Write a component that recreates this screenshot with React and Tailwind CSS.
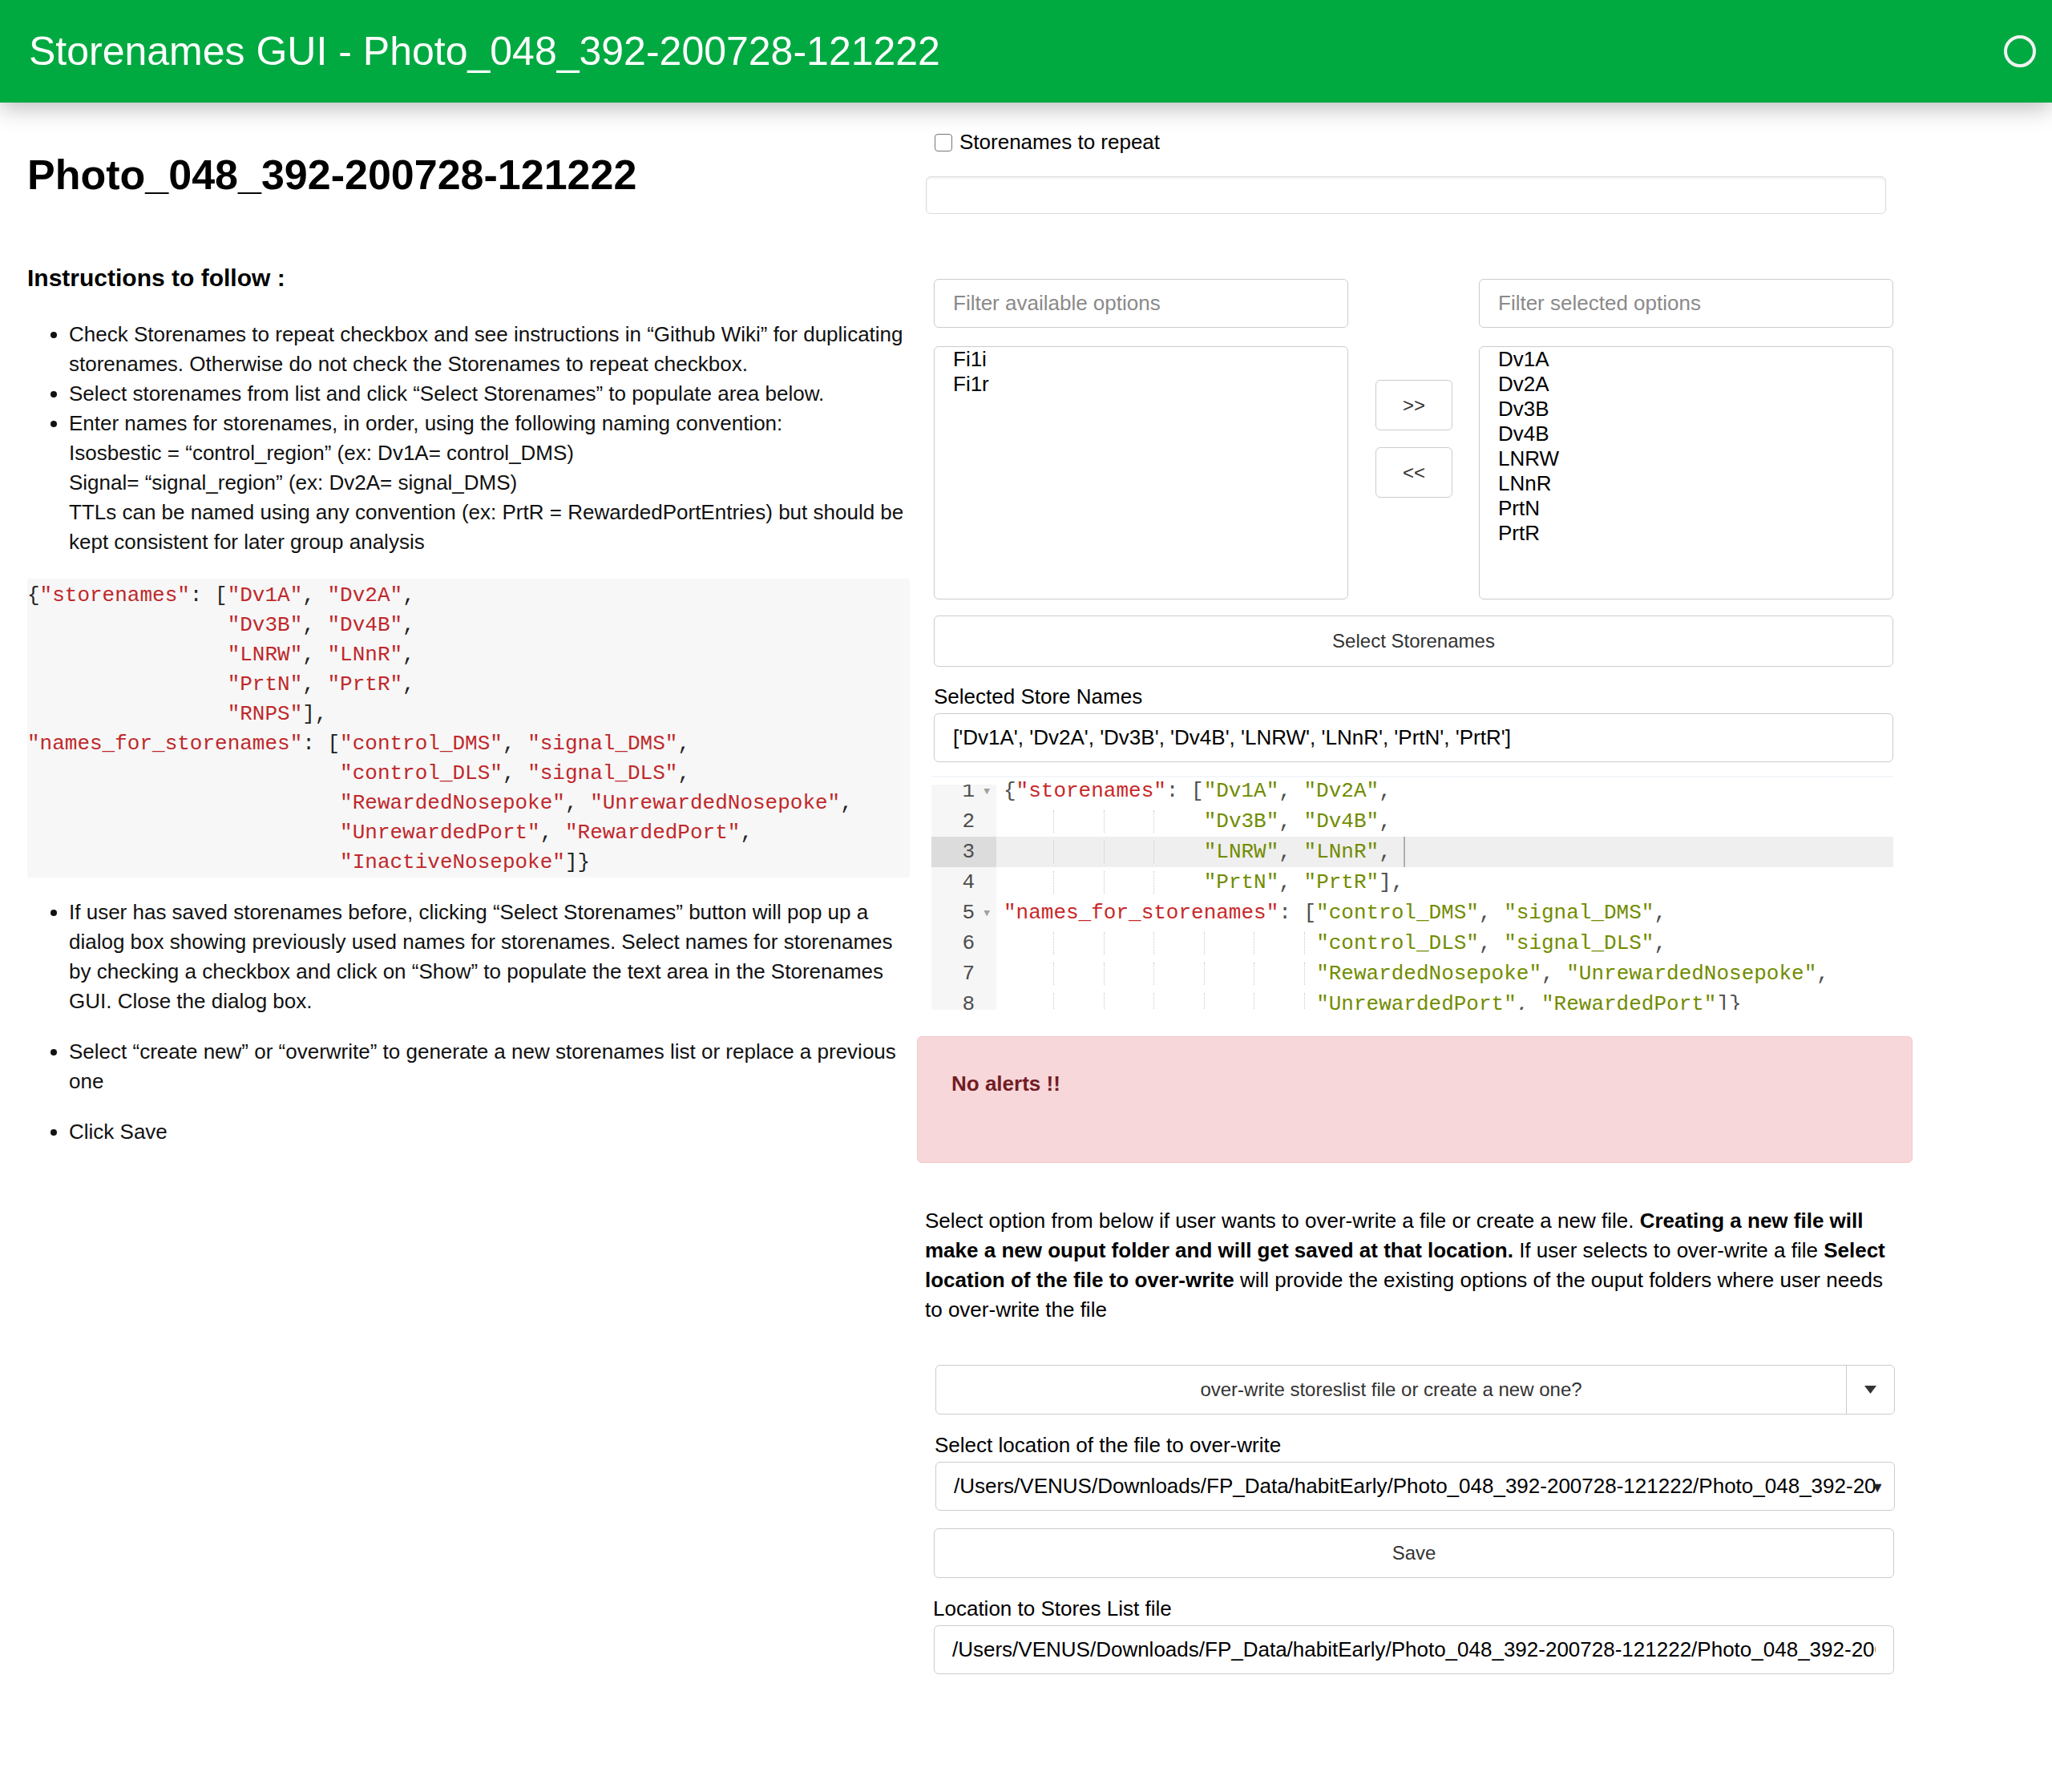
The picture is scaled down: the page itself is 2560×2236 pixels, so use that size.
import React from "react";

const mdCode = [
  '{"storenames": ["Dv1A", "Dv2A",',
  '                "Dv3B", "Dv4B",',
  '                "LNRW", "LNnR",',
  '                "PrtN", "PrtR",',
  '                "RNPS"],',
  '"names_for_storenames": ["control_DMS", "signal_DMS",',
  '                         "control_DLS", "signal_DLS",',
  '                         "RewardedNosepoke", "UnrewardedNosepoke",',
  '                         "UnrewardedPort", "RewardedPort",',
  '                         "InactiveNosepoke"]}',
];

const editorCode = [
  '{"storenames": ["Dv1A", "Dv2A",',
  '                "Dv3B", "Dv4B",',
  '                "LNRW", "LNnR",',
  '                "PrtN", "PrtR"],',
  '"names_for_storenames": ["control_DMS", "signal_DMS",',
  '                         "control_DLS", "signal_DLS",',
  '                         "RewardedNosepoke", "UnrewardedNosepoke",',
  '                         "UnrewardedPort", "RewardedPort"]}',
];

const available = ["Fi1i", "Fi1r"];
const selected = ["Dv1A", "Dv2A", "Dv3B", "Dv4B", "LNRW", "LNnR", "PrtN", "PrtR"];
const outPath =
  "/Users/VENUS/Downloads/FP_Data/habitEarly/Photo_048_392-200728-121222/Photo_048_392-200728-121222_output_1/storesList.csv";

const MdLine = ({ text }) => (
  <div className="h-[37px]">
    {text.split(/("[^"]*")/).map((p, i) =>
      p.startsWith('"') ? (
        <span key={i} className="text-[#c0282b]">{p}</span>
      ) : (
        <span key={i}>{p}</span>
      )
    )}
  </div>
);

// ace-style line: indent guides every 4 columns, keys red, values olive
const EditorLine = ({ text, n, active, fold }) => {
  const lead = text.match(/^ */)[0].length;
  const chunks = [];
  for (let c = 0; c < lead; c += 4) chunks.push(Math.min(4, lead - c));
  const parts = text.slice(lead).split(/("[^"]*")/);
  return (
    <div className={`flex h-[38px] ${active ? "bg-[#efefef]" : ""}`}>
      <div
        className={`relative w-[81px] shrink-0 pr-[27px] text-right text-[#4d4d4c] ${
          active ? "bg-[#dcdcdc]" : "bg-[#f6f6f6]"
        }`}
      >
        {n}
        {fold && (
          <span className="absolute right-[8px] top-[1px] text-[13px] text-[#a0a0a0]">▼</span>
        )}
      </div>
      <div className="relative flex-1 whitespace-pre pl-[9px] text-[#4d4d4c]">
        {chunks.map((w, i) => (
          <span key={i} className="relative inline-block">
            {" ".repeat(w)}
            {i > 0 && (
              <span className="absolute bottom-[5px] left-0 top-[5px] border-l-[1.5px] border-dotted border-[#c9c9c9]" />
            )}
          </span>
        ))}
        {parts.map((p, i) => {
          if (!p.startsWith('"')) return <span key={i}>{p}</span>;
          const isKey = (parts[i + 1] || "").startsWith(":");
          return (
            <span key={i} className={isKey ? "text-[#c82829]" : "text-[#718c00]"}>
              {p}
            </span>
          );
        })}
        {active && <span className="absolute left-[calc(9px+32ch)] top-0 h-full w-[2px] bg-[#aeafad]" />}
      </div>
    </div>
  );
};

const Box = ({ className = "", children }) => (
  <div className={`rounded-[6px] border border-[#cccccc] bg-white ${className}`}>{children}</div>
);

const Caret = () => (
  <svg width="15" height="10" viewBox="0 0 15 10">
    <polygon points="0,0 15,0 7.5,10" fill="#333" />
  </svg>
);

export default function App() {
  return (
    <div className="min-h-[2236px] w-[2560px] bg-white font-['Liberation_Sans',Arial,sans-serif] text-[#111]">
      {/* Header */}
      <header className="relative z-10 flex h-[128px] items-center justify-between bg-[#00aa41] pl-[36px] pr-[18px] shadow-[0_6px_28px_rgba(0,0,0,0.28)]">
        <h1 className="text-[50px] font-normal leading-none text-white">
          Storenames GUI - Photo_048_392-200728-121222
        </h1>
        <svg width="44" height="44" viewBox="0 0 44 44">
          <circle cx="22" cy="22" r="18" fill="none" stroke="#f2f2f2" strokeWidth="4" />
        </svg>
      </header>

      <div className="flex">
        {/* Left column: instructions */}
        <div className="ml-[34px] w-[1101px]">
          <h2 className="mt-[59px] text-[52px] font-bold leading-[62px] text-black">
            Photo_048_392-200728-121222
          </h2>
          <h3 className="mt-[80px] text-[30px] font-bold leading-[36px] text-black">
            Instructions to follow :
          </h3>
          <ul className="mt-[34px] list-disc pl-[52px] text-[26px] leading-[37px]">
            <li>
              Check Storenames to repeat checkbox and see instructions in “Github Wiki” for
              duplicating storenames. Otherwise do not check the Storenames to repeat checkbox.
            </li>
            <li>Select storenames from list and click “Select Storenames” to populate area below.</li>
            <li>
              Enter names for storenames, in order, using the following naming convention:
              <br />
              Isosbestic = “control_region” (ex: Dv1A= control_DMS)
              <br />
              Signal= “signal_region” (ex: Dv2A= signal_DMS)
              <br />
              TTLs can be named using any convention (ex: PrtR = RewardedPortEntries) but should be
              kept consistent for later group analysis
            </li>
          </ul>

          <pre className="mt-[27px] bg-[#f7f7f7] pt-[3px] font-['Liberation_Mono',monospace] text-[26px] leading-[37px] text-[#222]">
            {mdCode.map((l, i) => (
              <MdLine key={i} text={l} />
            ))}
          </pre>

          <ul className="mt-[25px] list-disc pl-[52px] text-[26px] leading-[37px]">
            <li className="mb-[26px]">
              If user has saved storenames before, clicking “Select Storenames” button will pop up a
              dialog box showing previously used names for storenames. Select names for storenames
              by checking a checkbox and click on “Show” to populate the text area in the
              Storenames GUI. Close the dialog box.
            </li>
            <li className="mb-[26px]">
              Select “create new” or “overwrite” to generate a new storenames list or replace a
              previous one
            </li>
            <li>Click Save</li>
          </ul>
        </div>

        {/* Right column: widgets */}
        <div className="ml-[9px] w-[1242px] text-[26px]">
          <label className="mt-[31px] flex h-[37px] items-center pl-[22px]">
            <span className="h-[22px] w-[22px] rounded-[4px] border-[1.5px] border-[#767676] bg-white" />
            <span className="ml-[9px] text-black">Storenames to repeat</span>
          </label>

          <div className="ml-[11px] mt-[24px] h-[47px] w-[1198px] rounded-[6px] border border-[#dcdcdc] shadow-[inset_0_2px_3px_rgba(0,0,0,0.06)]" />

          {/* Cross selector */}
          <div className="ml-[21px] mt-[81px] flex w-[1197px]">
            <div className="w-[517px]">
              <Box className="flex h-[61px] items-center pl-[23px] text-[#8a8a8a]">
                Filter available options
              </Box>
              <Box className="mt-[23px] h-[316px] pl-[23px] text-black">
                {available.map((s) => (
                  <div key={s} className="h-[31px] leading-[31px]">{s}</div>
                ))}
              </Box>
            </div>
            <div className="ml-[34px] flex w-[96px] flex-col gap-[21px] pt-[126px] text-[24px] text-[#333]">
              <Box className="flex h-[63px] items-center justify-center">&gt;&gt;</Box>
              <Box className="flex h-[63px] items-center justify-center">&lt;&lt;</Box>
            </div>
            <div className="ml-[33px] w-[517px]">
              <Box className="flex h-[61px] items-center pl-[23px] text-[#8a8a8a]">
                Filter selected options
              </Box>
              <Box className="mt-[23px] h-[316px] pl-[23px] text-black">
                {selected.map((s) => (
                  <div key={s} className="h-[31px] leading-[31px]">{s}</div>
                ))}
              </Box>
            </div>
          </div>

          <Box className="ml-[21px] mt-[20px] flex h-[64px] w-[1197px] items-center justify-center text-[24px] text-[#333]">
            Select Storenames
          </Box>

          <div className="ml-[21px] mt-[22px] leading-[30px] text-black">Selected Store Names</div>
          <Box className="ml-[21px] mt-[6px] flex h-[61px] w-[1197px] items-center pl-[23px] text-black">
            ['Dv1A', 'Dv2A', 'Dv3B', 'Dv4B', 'LNRW', 'LNnR', 'PrtN', 'PrtR']
          </Box>

          {/* Code editor */}
          <div className="relative ml-[18px] mt-[17px] h-[292px] w-[1200px] overflow-hidden bg-white font-['Liberation_Mono',monospace] text-[26px] leading-[38px]">
            {editorCode.map((l, i) => (
              <EditorLine key={i} text={l} n={i + 1} active={i === 2} fold={i === 0 || i === 4} />
            ))}
            <div className="absolute left-0 top-0 h-[11px] w-[81px] bg-white" />
            <div className="absolute inset-x-0 top-0 h-[3px] bg-gradient-to-b from-[#eef3f8] to-transparent" />
          </div>

          {/* Alert */}
          <div className="mt-[33px] h-[158px] w-[1242px] rounded-[6px] border border-[#f5c6cb] bg-[#f8d7da] pl-[42px] pt-[40px] font-bold leading-[37px] text-[#721c24]">
            No alerts !!
          </div>

          <p className="ml-[10px] mt-[54px] w-[1210px] leading-[37px] text-black">
            Select option from below if user wants to over-write a file or create a new file.{" "}
            <b>Creating a new file will make a new ouput folder and will get saved at that location.</b>{" "}
            If user selects to over-write a file <b>Select location of the file to over-write</b> will
            provide the existing options of the ouput folders where user needs to over-write the file
          </p>

          <Box className="ml-[23px] mt-[50px] flex h-[62px] w-[1197px] text-[24px] text-[#333]">
            <div className="flex flex-1 items-center justify-center">
              over-write storeslist file or create a new one?
            </div>
            <div className="flex w-[60px] items-center justify-center border-l border-[#cccccc]">
              <Caret />
            </div>
          </Box>

          <div className="ml-[22px] mt-[23px] leading-[30px] text-black">
            Select location of the file to over-write
          </div>
          <Box className="relative ml-[23px] mt-[6px] flex h-[61px] w-[1197px] items-center pl-[22px] pr-[22px] text-black">
            <span className="overflow-hidden whitespace-nowrap">{outPath}</span>
            <span className="absolute right-[12px] top-[18px] text-[18px] text-[#222]">▼</span>
          </Box>

          <Box className="ml-[21px] mt-[22px] flex h-[62px] w-[1198px] items-center justify-center text-[24px] text-[#333]">
            Save
          </Box>

          <div className="ml-[20px] mt-[23px] leading-[30px] text-black">Location to Stores List file</div>
          <Box className="ml-[21px] mt-[6px] flex h-[61px] w-[1198px] items-center pl-[22px] pr-[22px] text-black">
            <span className="overflow-hidden whitespace-nowrap">{outPath}</span>
          </Box>
        </div>
      </div>
    </div>
  );
}
